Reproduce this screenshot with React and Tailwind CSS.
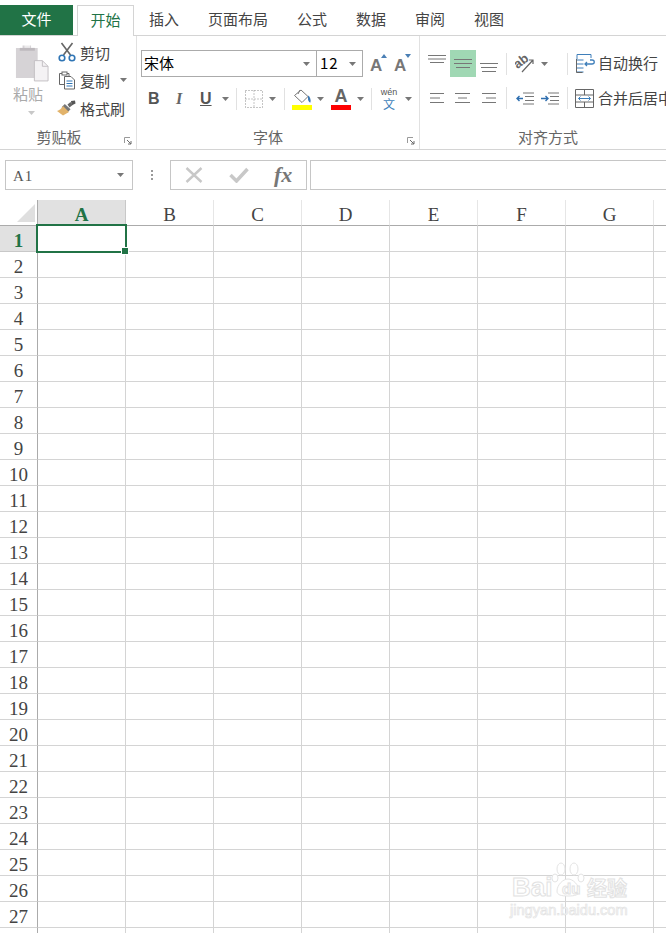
import React from "react";

const CJK = "font-['Noto_Sans_CJK_SC','Noto_Sans',sans-serif]";
const SERIF = "font-['Liberation_Serif','Noto_Serif',serif]";

const Caret = ({ className = "" }) => (
  <svg width="7" height="4" viewBox="0 0 7 4" className={"shrink-0 " + className}>
    <path d="M0 0h7L3.5 4z" fill="#777" />
  </svg>
);

const Divider = ({ h = "h-[22px]", className = "" }) => (
  <div className={"w-px bg-[#e1e1e1] shrink-0 " + h + " " + className} />
);

const Launcher = () => (
  <svg width="8" height="8" viewBox="0 0 8 8" className="absolute right-[4px] bottom-[4px]">
    <path d="M0.5 6V0.5H6" fill="none" stroke="#9a9a9a" />
    <path d="M3 3l4 4M7 4v3H4" fill="none" stroke="#6a6a6a" />
  </svg>
);

const Group = ({ width, label, launcher, children, last, labelPad }) => (
  <div className={"relative flex flex-col shrink-0 h-full " + width + (last ? "" : " border-r border-[#e1e1e1]")}>
    <div className="flex-1 min-h-0 overflow-hidden">{children}</div>
    <div className={"h-[24px] flex items-center justify-center text-[15px] leading-none text-[#666] pb-[1px] " + labelPad + " " + CJK}>{label}</div>
    {launcher && <Launcher />}
  </div>
);

const PasteIcon = () => (
  <svg width="34" height="38" viewBox="0 0 36 40">
    <path d="M1 4h7V1.5h9V4h7v32H1z" fill="#d6d3d6" />
    <rect x="10" y="0.5" width="6" height="4" fill="#fff" opacity="0.55" />
    <path d="M5 4h16v3H5z" fill="#bdb9bd" />
    <path d="M20.5 17.5H29l6 6v15.5H20.5z" fill="#f4f2f4" stroke="#c2bec2" />
    <path d="M29 17.5v6h6" fill="none" stroke="#c2bec2" />
  </svg>
);

const Scissors = () => (
  <svg width="18" height="20" viewBox="0 0 18 20">
    <path d="M3.5 1l9 12M14.5 1l-9 12" stroke="#666" strokeWidth="1.6" fill="none" />
    <circle cx="4" cy="16" r="2.8" fill="none" stroke="#2f75b5" strokeWidth="1.6" />
    <circle cx="14" cy="16" r="2.8" fill="none" stroke="#2f75b5" strokeWidth="1.6" />
  </svg>
);

const CopyIcon = () => (
  <svg width="18" height="19" viewBox="0 0 18 19">
    <path d="M7 13.5H1.5V2.5H4M9 2.5h2V5" fill="none" stroke="#666" />
    <rect x="4" y="1" width="5" height="3" fill="#fff" stroke="#666" />
    <path d="M6.5 5.5H13l3.5 3.5v9H6.5z" fill="#fff" stroke="#666" />
    <path d="M8.5 10h6M8.5 12.5h6M8.5 15h6" stroke="#2f75b5" />
  </svg>
);

const Brush = () => (
  <svg width="20" height="16" viewBox="0 0 20 16">
    <path d="M14 1l4-0.5 0.5 3-4 2z" fill="#555" />
    <path d="M8 3.5l6 5-3 3.5-6-5z" fill="#777" transform="rotate(3)" />
    <path d="M6 6l6 6-6 3.5L0 11c2.5-.5 4.5-2.5 6-5z" fill="#e2b36b" />
    <path d="M10.5 4.5l3-2.5 2 3-3 2.5z" fill="#666" />
  </svg>
);

const SmallBtn = ({ icon, label, caret }) => (
  <div className="flex items-center h-[28px]">
    <div className="w-[20px] flex justify-center shrink-0">{icon}</div>
    <span className={"ml-[3px] text-[15px] leading-none text-[#444] " + CJK}>{label}</span>
    {caret && <Caret className="ml-[10px]" />}
  </div>
);

const Combo = ({ width, label, extra = "", labelClass = "" }) => (
  <div className={"h-[27px] border border-[#ababab] flex items-center justify-between pl-[2px] pr-[6px] " + width + " " + extra}>
    <span className={"text-[15px] leading-none text-black pb-[2px] " + labelClass + " " + CJK}>{label}</span>
    <Caret />
  </div>
);

const GrowFont = ({ up }) => (
  <div className="relative w-[17px] h-[22px]">
    <span className="absolute left-0 bottom-[1px] text-[17px] leading-none font-semibold text-[#777] font-['Liberation_Sans',sans-serif]">A</span>
    <svg width="6" height="4" viewBox="0 0 6 4" className="absolute right-0 top-[1px]">
      <path d={up ? "M3 0l3 4H0z" : "M0 0h6L3 4z"} fill="#4a7fb5" />
    </svg>
  </div>
);

const BorderIcon = () => (
  <svg width="18" height="18" viewBox="0 0 18 18">
    <path d="M.5.5h17v17H.5zM9 .5v17M.5 9h17" fill="none" stroke="#8a8a8a" strokeDasharray="1 2" />
  </svg>
);

const FillIcon = () => (
  <div className="flex flex-col items-center w-[20px]">
    <svg width="20" height="15" viewBox="0 0 20 15">
      <path d="M9 1l7 6.5-6 6-7.5-7z" fill="#fff" stroke="#777" />
      <path d="M8 1L6 5" stroke="#777" fill="none" />
      <path d="M16 6.500c2 1 3 4 2.500 7-1.500 0-2.500-2-2.500-3.500z" fill="#3a78b5" />
    </svg>
    <div className="w-[20px] h-[5px] bg-[#ffff00] mt-[1px]" />
  </div>
);

const ColorA = () => (
  <div className="flex flex-col items-center w-[20px]">
    <span className="block h-[15px] text-[18px] leading-[15px] font-bold text-[#666] font-['Liberation_Sans',sans-serif]">A</span>
    <div className="w-[20px] h-[5px] bg-[#ff0000] mt-[1px]" />
  </div>
);

const Wen = () => (
  <div className="flex flex-col items-center w-[18px] leading-none">
    <span className="text-[9px] leading-[9px] text-[#555] font-['Liberation_Sans',sans-serif]">wén</span>
    <span className={"mt-[1px] text-[12px] leading-[12px] text-[#3f7fba] " + CJK}>文</span>
  </div>
);

const Lines = ({ w = 18, h = 11, widths, gap = 4 }) => (
  <svg width={w} height={h} viewBox={`0 0 ${w} ${h}`}>
    {widths.map(([x1, x2], i) => (
      <path key={i} d={`M${x1} ${0.5 + i * gap}H${x2}`} stroke="#777" fill="none" />
    ))}
  </svg>
);

const OrientIcon = () => (
  <svg width="20" height="19" viewBox="0 0 20 19">
    <text x="0" y="12" fontSize="13" fontWeight="700" fill="#666" transform="rotate(-38 6 10)" fontFamily="Liberation Sans">ab</text>
    <path d="M7 18L18 6M14 6h4v4" fill="none" stroke="#666" strokeWidth="1.200" />
  </svg>
);

const WrapIcon = () => (
  <svg width="19" height="19" viewBox="0 0 19 19">
    <path d="M1 5V.5h14V4M.5 6h7M.5 10h7M.5 14h7M.5 18h7" fill="none" stroke="#3f7fba" />
    <path d="M.5 5v13.500h6" fill="none" stroke="#666" />
    <path d="M9 10h7c3 0 3-4 0-4h-2M11 8l-2 2 2 2" fill="none" stroke="#3f7fba" strokeWidth="1.300" />
  </svg>
);

const MergeIcon = () => (
  <svg width="19" height="19" viewBox="0 0 19 19">
    <path d="M.5.5h18v18H.5zM.5 6h18M.5 13h18M9.500.5V6M9.500 13v5.500" fill="none" stroke="#666" />
    <path d="M3.500 9.500h12M5.500 7.500l-2 2 2 2M13.500 7.500l2 2-2 2" fill="none" stroke="#3f7fba" />
  </svg>
);

const IndentIcon = ({ dir }) => (
  <svg width="18" height="13" viewBox="0 0 18 13">
    <path d="M7 1h11M9 4.500h9M9 8.500h9M7 12h11" stroke="#777" fill="none" />
    <path d={dir === "l" ? "M7 6.500H1M3.500 4l-2.500 2.500L3.500 9" : "M0 6.500h7M4.500 4L7 6.500 4.500 9"} stroke="#2f6fb0" strokeWidth="1.400" fill="none" />
  </svg>
);

const Ribbon = () => (
  <div className="flex h-[114px] border-b border-[#d4d4d4]">
    <Group width="w-[137px]" label="剪贴板" launcher labelPad="pr-[18px]">
      <div className="flex">
        <div className="w-[57px] pl-[15px] pt-[8px] flex flex-col">
          <PasteIcon />
          <span className={"mt-[4px] -ml-[2px] text-[15px] leading-none text-[#aaa] " + CJK}>粘贴</span>
          <Caret className="mt-[10px] ml-[13px] opacity-40" />
        </div>
        <div className="pt-[2px]">
          <SmallBtn icon={<Scissors />} label="剪切" />
          <SmallBtn icon={<CopyIcon />} label="复制" caret />
          <SmallBtn icon={<Brush />} label="格式刷" />
        </div>
      </div>
    </Group>

    <Group width="w-[283px]" label="字体" launcher labelPad="pr-[20px]">
      <div className="pl-[4px] pt-[14px]">
        <div className="flex items-center">
          <Combo width="w-[176px]" label="宋体" />
          <Combo width="w-[47px]" label="12" extra="-ml-px" labelClass="tracking-[1px] pl-px" />
          <div className="flex ml-[7px] gap-[7px]">
            <GrowFont up />
            <GrowFont />
          </div>
        </div>
        <div className="flex items-center h-[22px] mt-[11px]">
          <span className="ml-[7px] w-[27px] text-[16px] leading-none font-bold text-[#555] font-['Liberation_Sans',sans-serif]">B</span>
          <span className="ml-[1px] w-[24px] text-[16px] leading-none font-bold italic text-[#666] font-['Liberation_Serif',serif]">I</span>
          <span className="w-[15px] text-[16px] leading-none font-bold underline text-[#555] font-['Liberation_Sans',sans-serif]">U</span>
          <Caret className="ml-[7px]" />
          <Divider className="ml-[7px]" />
          <div className="ml-[8px]"><BorderIcon /></div>
          <Caret className="ml-[6px]" />
          <Divider className="ml-[8px]" />
          <div className="ml-[7px]"><FillIcon /></div>
          <Caret className="ml-[5px]" />
          <div className="ml-[7px]"><ColorA /></div>
          <Caret className="ml-[6px]" />
          <Divider className="ml-[7px]" />
          <div className="ml-[8px]"><Wen /></div>
          <Caret className="ml-[7px]" />
        </div>
      </div>
    </Group>

    <Group width="flex-1 min-w-0" label="对齐方式" labelPad="pl-[10px]" last>
      <div className="pt-[14px] pl-[8px] whitespace-nowrap">
        <div className="flex items-center h-[27px]">
          <div className="w-[22px] shrink-0 self-start pt-[5px] flex"><Lines w={18} h={10} widths={[[0, 18], [0, 18], [2, 16]]} gap={3.5} /></div>
          <div className="w-[26px] h-[27px] shrink-0 bg-[#a0d8b4] flex items-center justify-center"><Lines w={18} h={10} widths={[[0, 18], [0, 18], [2, 16]]} gap={4} /></div>
          <div className="w-[30px] shrink-0 self-end pb-[4px] pl-[4px] flex"><Lines w={18} h={10} widths={[[0, 18], [1, 17], [2, 16]]} gap={4} /></div>
          <Divider h="h-[22px]" />
          <div className="ml-[8px] shrink-0"><OrientIcon /></div>
          <Caret className="ml-[6px]" />
          <Divider h="h-[22px]" className="ml-[19px]" />
          <div className="ml-[8px] shrink-0"><WrapIcon /></div>
          <span className={"ml-[3px] pb-[2px] shrink-0 text-[15px] leading-none text-[#444] " + CJK}>自动换行</span>
        </div>
        <div className="flex items-center h-[22px] mt-[10px]">
          <div className="w-[27px] shrink-0 pl-[2px] flex"><Lines w={15} h={11} widths={[[0, 14], [0, 10], [0, 14]]} gap={4.500} /></div>
          <div className="w-[27px] shrink-0 flex"><Lines w={16} h={11} widths={[[0, 15], [3, 12], [0, 15]]} gap={4.500} /></div>
          <div className="w-[24px] shrink-0 flex"><Lines w={15} h={11} widths={[[0, 14], [4, 14], [0, 14]]} gap={4.500} /></div>
          <Divider h="h-[22px]" />
          <div className="ml-[9px] shrink-0"><IndentIcon dir="l" /></div>
          <div className="ml-[7px] shrink-0"><IndentIcon dir="r" /></div>
          <Divider h="h-[22px]" className="ml-[8px]" />
          <div className="ml-[7px] shrink-0"><MergeIcon /></div>
          <span className={"ml-[4px] pb-[1px] shrink-0 text-[15px] leading-none text-[#444] " + CJK}>合并后居中</span>
        </div>
      </div>
    </Group>
  </div>
);

const Tabs = () => (
  <div className="relative flex items-end h-[36px] pt-[6px] border-b border-[#d4d4d4] whitespace-nowrap">
    <div className={"w-[73px] h-[30px] pb-[2px] bg-[#217346] text-white text-[15px] flex items-center justify-center " + CJK}>文件</div>
    <div className={"ml-[4px] w-[57px] h-[31px] pb-[2px] -mb-px bg-white border border-b-0 border-[#d4d4d4] text-[#217346] text-[15px] flex items-center justify-center " + CJK}>开始</div>
    <div className={"flex items-center h-[30px] pb-[2px] ml-[15px] gap-[29px] text-[15px] text-[#444] " + CJK}>
      {["插入", "页面布局", "公式", "数据", "审阅", "视图"].map((t) => (
        <span key={t}>{t}</span>
      ))}
    </div>
  </div>
);

const FormulaBar = () => (
  <div className="flex items-start h-[50px] pt-[10px] pl-[5px]">
    <div className="w-[128px] h-[30px] border border-[#c6c6c6] flex items-center justify-between pl-[7px] pr-[8px]">
      <span className={"text-[15px] tracking-[1px] leading-none text-[#555] pt-[2px] " + SERIF}>A1</span>
      <Caret />
    </div>
    <div className="w-[37px] h-[30px] flex flex-col items-center justify-center gap-[2px]">
      {[0, 1, 2].map((i) => (
        <div key={i} className="w-[2px] h-[2px] bg-[#9a9a9a]" />
      ))}
    </div>
    <div className="w-[137px] h-[30px] border border-[#c6c6c6] flex items-center shrink-0">
      <svg width="18" height="16" viewBox="0 0 18 16" className="ml-[14px]">
        <path d="M1.500 1l15 14M16.500 1l-15 14" stroke="#c8c8c8" strokeWidth="2.400" fill="none" />
      </svg>
      <svg width="20" height="16" viewBox="0 0 20 16" className="ml-[26px]">
        <path d="M1.500 8l6 6L18.500 2" stroke="#c8c8c8" strokeWidth="3.500" fill="none" />
      </svg>
      <span className="ml-[25px] text-[22px] leading-none font-bold italic text-[#777] font-['Liberation_Serif',serif]">fx</span>
    </div>
    <div className="ml-[3px] flex-1 h-[30px] border border-r-0 border-[#c6c6c6]" />
  </div>
);

const COLS = ["A", "B", "C", "D", "E", "F", "G", ""];
const ROWS = Array.from({ length: 28 }, (_, i) => i + 1);

const Sheet = () => (
  <div className={"relative flex-1 min-h-0 overflow-hidden grid grid-cols-[38px_repeat(8,88px)] auto-rows-[26px] text-[19px] leading-none " + SERIF}>
    <div className="border-r border-b border-[#ababab] flex items-end justify-end pr-[2px] pb-[3px] bg-white">
      <svg width="18" height="18" viewBox="0 0 18 18"><path d="M18 0v18H0z" fill="#dfdfdf" /></svg>
    </div>
    {COLS.map((c, i) => (
      <div
        key={i}
        className={
          "border-b border-r border-b-[#ababab] pt-[3px] flex items-center justify-center " +
          (i === 0 ? "bg-[#e1e1e1] border-r-[#c8c8c8] text-[#217346] font-bold" : "bg-white border-r-[#e6e6e6] text-[#444]")
        }
      >
        {c}
      </div>
    ))}
    {ROWS.map((r) => (
      <React.Fragment key={r}>
        <div
          className={
            "border-r border-b border-r-[#ababab] pt-[3px] flex items-center justify-center " +
            (r === 1 ? "bg-[#e1e1e1] border-b-[#c8c8c8] text-[#217346] font-bold" : "border-b-[#d4d4d4] text-[#444]")
          }
        >
          {r === 28 ? "" : r}
        </div>
        {COLS.map((_, i) => (
          <div key={i} className="border-r border-b border-[#d4d4d4]" />
        ))}
      </React.Fragment>
    ))}

    <div className="absolute left-[36px] top-[24px] w-[91px] h-[29px] border-2 border-[#217346]">
      <div className="absolute -right-[3px] -bottom-[3px] w-[6px] h-[6px] bg-[#217346] border border-white box-content -mr-px -mb-px" />
    </div>

    <div className="absolute left-[510px] top-[660px] w-[122px] h-[60px] text-white [-webkit-text-stroke:1px_#e2e2e2] font-['Liberation_Sans',sans-serif]">
      <svg width="36" height="36" viewBox="0 0 36 36" className="absolute left-[41px] top-[1px]">
        <g fill="#fff" stroke="#e4e4e4">
          <ellipse cx="10" cy="8" rx="4" ry="6" />
          <ellipse cx="23" cy="8" rx="4" ry="6" />
          <ellipse cx="4" cy="17" rx="3" ry="4" />
          <ellipse cx="30" cy="17" rx="3" ry="4" />
          <path d="M6 30c0-6 6-12 11-12s11 6 11 12c0 4-4 5-11 5S6 34 6 30z" />
        </g>
      </svg>
      <span className="absolute left-[2px] top-[14px] text-[26px] leading-none font-bold">Bai</span>
      <span className="absolute left-[52px] top-[21px] text-[15px] leading-none font-bold">du</span>
      <span className={"absolute left-[77px] top-[18px] text-[20px] leading-none font-bold " + CJK}>经验</span>
      <span className="absolute left-0 top-[43px] text-[14.6px] leading-none [-webkit-text-stroke:0.7px_#e2e2e2]">jingyan.baidu.com</span>
    </div>
  </div>
);

export default function App() {
  return (
    <div className="w-[666px] h-[933px] overflow-hidden bg-white flex flex-col">
      <Tabs />
      <Ribbon />
      <FormulaBar />
      <Sheet />
    </div>
  );
}
